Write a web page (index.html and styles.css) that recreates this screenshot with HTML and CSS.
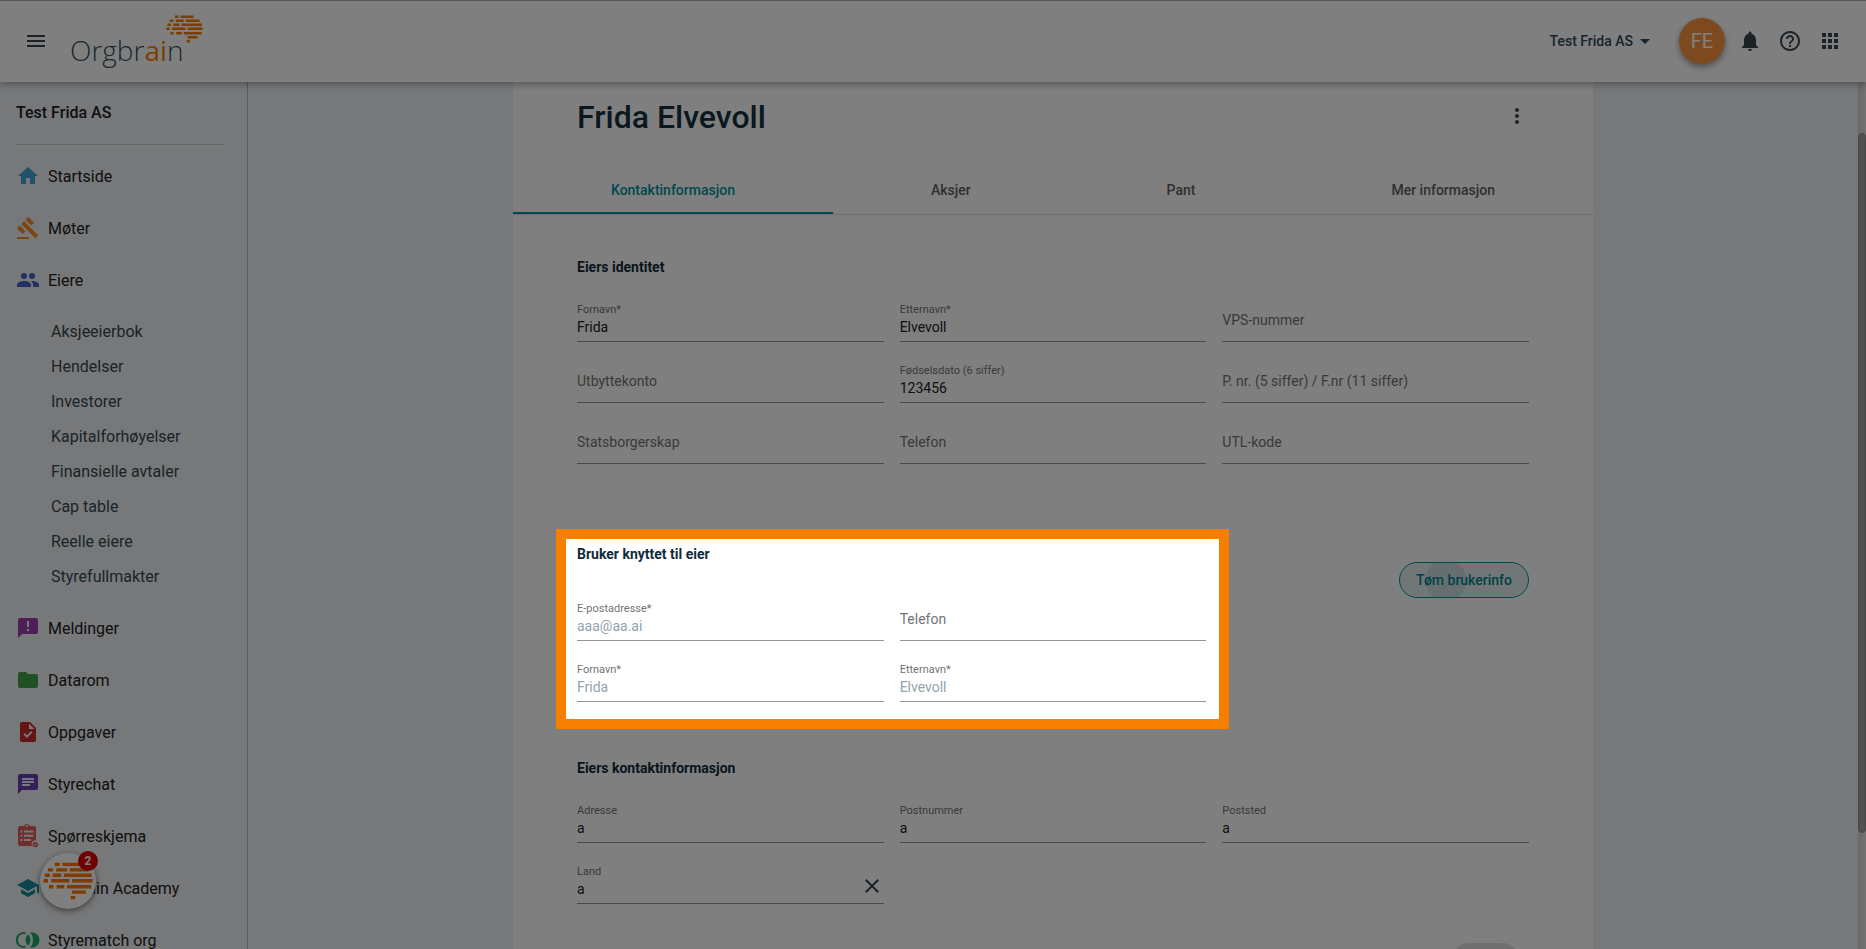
FILE: index.html
```html
<!DOCTYPE html>
<html lang="no">
<head>
<meta charset="utf-8">
<title>Orgbrain – Frida Elvevoll</title>
<link rel="stylesheet" href="styles.css">
</head>
<body>
<svg class="defs" aria-hidden="true">
  <symbol id="brain" viewBox="500 44 110 83">
    <g stroke="currentColor" stroke-width="7.5" stroke-linecap="butt">
      <path d="M526 49h11M543 49h39M511 61h11M529 61h24M559 61h41M504 73h11M521 73h19M546 73h61M501 85h10M518 85h40M564 85h45M513 98h10M530 98h17M553 98h53M564 110h30M561 122h10"/>
    </g>
  </symbol>
</svg>
<div class="app">
  <header class="topbar">
    <button class="icon-btn" aria-label="Meny"><svg viewBox="0 0 24 24"><path d="M3 18h18v-2H3v2zm0-5h18v-2H3v2zm0-7v2h18V6H3z"/></svg></button>
    <a class="logo" href="#" aria-label="Orgbrain"><span class="logo-text">Orgbr<b>ai</b>n</span><svg class="logo-mark"><use href="#brain"/></svg></a>
    <button class="org">Test Frida AS<svg viewBox="0 0 24 24"><path d="M7 10l5 5 5-5z"/></svg></button>
    <button class="avatar">FE</button>
    <nav class="tools">
      <button class="icon-btn" aria-label="Varsler"><svg viewBox="0 0 24 24"><path d="M12 22c1.100 0 2-.9 2-2h-4c0 1.100.89 2 2 2zm6-6v-5c0-3.070-1.640-5.640-4.500-6.320V4c0-.83-.67-1.500-1.500-1.500s-1.500.67-1.500 1.500v.68C7.630 5.360 6 7.920 6 11v5l-2 2v1h16v-1l-2-2z"/></svg></button>
      <button class="icon-btn" aria-label="Hjelp"><svg viewBox="0 0 24 24"><path d="M11 18h2v-2h-2v2zm1-16C6.480 2 2 6.480 2 12s4.480 10 10 10 10-4.480 10-10S17.520 2 12 2zm0 18c-4.410 0-8-3.590-8-8s3.590-8 8-8 8 3.590 8 8-3.590 8-8 8zm0-14c-2.210 0-4 1.790-4 4h2c0-1.100.9-2 2-2s2 .9 2 2c0 2-3 1.750-3 5h2c0-2.250 3-2.500 3-5 0-2.210-1.790-4-4-4z"/></svg></button>
      <button class="icon-btn" aria-label="Apper"><svg viewBox="0 0 24 24"><path d="M4 8h4V4H4v4zm6 12h4v-4h-4v4zm-6 0h4v-4H4v4zm0-6h4v-4H4v4zm6 0h4v-4h-4v4zm6-10v4h4V4h-4zm-6 4h4V4h-4v4zm6 6h4v-4h-4v4zm0 6h4v-4h-4v4z"/></svg></button>
    </nav>
  </header>

  <div class="body">
    <aside class="sidebar">
      <h2 class="side-title">Test Frida AS</h2>
      <nav class="side-nav">
        <a class="item" href="#"><svg viewBox="0 0 24 24" fill="#42a5d8"><path d="M10 20v-6h4v6h5v-8h3L12 3 2 12h3v8z"/></svg>Startside</a>
        <a class="item" href="#"><svg viewBox="0 0 24 24" fill="#f58a1f"><path d="M1 21h12v2H1zM5.245 8.070l2.830-2.827 14.140 14.142-2.828 2.828zM12.317 1l5.657 5.656-2.830 2.830-5.654-5.660zM3.825 9.485l5.657 5.657-2.828 2.828-5.657-5.657z"/></svg>Møter</a>
        <a class="item" href="#"><svg viewBox="0 0 24 24" fill="#4a5fc1"><circle cx="16" cy="8" r="3"/><circle cx="8" cy="8" r="3"/><path d="M8 13c-2.700 0-7 1-7 4v2h14v-2c0-3-4.300-4-7-4zm8 0c-.300 0-.600 0-1 .100 1.400.900 2 2.200 2 3.900v2h6v-2c0-3-4.300-4-7-4z"/></svg>Eiere</a>
        <div class="sub">
          <a href="#">Aksjeeierbok</a><a href="#">Hendelser</a><a href="#">Investorer</a><a href="#">Kapitalforhøyelser</a><a href="#">Finansielle avtaler</a><a href="#">Cap table</a><a href="#">Reelle eiere</a><a href="#">Styrefullmakter</a>
        </div>
        <a class="item" href="#"><svg viewBox="0 0 24 24" fill="#9c3fa8"><path d="M20 2H4c-1.100 0-1.990.9-1.990 2L2 22l4-4h14c1.100 0 2-.9 2-2V4c0-1.100-.9-2-2-2zm-7 13h-2v-2h2v2zm0-4h-2V5h2v6z"/></svg>Meldinger</a>
        <a class="item" href="#"><svg viewBox="0 0 24 24" fill="#43a047"><path d="M10 4H4c-1.100 0-1.990.9-1.990 2L2 18c0 1.100.9 2 2 2h16c1.100 0 2-.9 2-2V8c0-1.100-.9-2-2-2h-8l-2-2z"/></svg>Datarom</a>
        <a class="item" href="#"><svg viewBox="0 0 24 24" fill="#c62828"><path d="M14 2H6c-1.100 0-2 .9-2 2v16c0 1.100.89 2 1.990 2H18c1.100 0 2-.9 2-2V8l-6-6zm-3.060 16L7.400 14.460l1.410-1.410 2.120 2.120 4.240-4.240 1.410 1.410L10.940 18zM13 9V3.500L18.500 9H13z"/></svg>Oppgaver</a>
        <a class="item" href="#"><svg viewBox="0 0 24 24" fill="#6a3fb5"><path d="M20 2H4c-1.100 0-1.990.9-1.990 2L2 22l4-4h14c1.100 0 2-.9 2-2V4c0-1.100-.9-2-2-2zM6 6h12v2H6V6zm8 8H6v-2h8v2zm4-3H6V9h12v2z"/></svg>Styrechat</a>
        <a class="item" href="#"><svg viewBox="0 0 24 24" fill="#e05a5a"><path fill-rule="evenodd" d="M4 2h4.200a3 3 0 0 1 5.600 0H18a2 2 0 0 1 2 2v12.500a3.500 3.500 0 0 0-3.700 5.500H4a2 2 0 0 1-2-2V4a2 2 0 0 1 2-2zm7-1.200a1 1 0 1 0 0 2 1 1 0 0 0 0-2zM4.500 6.500v2h2v-2zm3.500 0v2h9.500v-2zm-3.500 4.300v2h2v-2zm3.500 0v2h9.500v-2zM4.500 15v2h2v-2zM8 15v2h7v-2z"/><circle cx="19.300" cy="20.600" r="2.700"/><path d="M18 20.700l1 1 1.700-2" fill="none" stroke="#eef0f2" stroke-width=".8"/></svg>Spørreskjema</a>
        <a class="item" href="#"><svg viewBox="0 0 24 24" fill="#168c9c"><path d="M5 13.180v4L12 21l7-3.820v-4L12 17l-7-3.820zM12 3L1 9l11 6 9-4.910V17h2V9L12 3z"/></svg>Orgbrain Academy</a>
        <a class="item" href="#"><svg viewBox="0 0 24 24" fill="#1fa863"><path d="M12 6.200a8 8 0 0 1 0 11.600 8 8 0 0 1 0-11.600z"/><path d="M9.500 5.200a7 7 0 1 0 0 13.600" fill="none" stroke="#1fa863" stroke-width="2"/><path d="M14 4.500h2a7.500 7.500 0 0 1 0 15h-2c4-4 4-11 0-15z"/></svg>Styrematch org</a>
      </nav>
    </aside>

    <main class="main">
      <article class="card">
        <div class="card-head">
          <h1>Frida Elvevoll</h1>
          <button class="icon-btn" aria-label="Flere valg"><svg viewBox="0 0 24 24"><path d="M12 8c1.100 0 2-.9 2-2s-.9-2-2-2-2 .9-2 2 .9 2 2 2zm0 2c-1.100 0-2 .9-2 2s.9 2 2 2 2-.9 2-2-.9-2-2-2zm0 6c-1.100 0-2 .9-2 2s.9 2 2 2 2-.9 2-2-.9-2-2-2z"/></svg></button>
        </div>
        <div class="tabs" role="tablist">
          <button class="tab active" role="tab" aria-selected="true">Kontaktinformasjon</button>
          <button class="tab" role="tab">Aksjer</button>
          <button class="tab" role="tab">Pant</button>
          <button class="tab" role="tab">Mer informasjon</button>
        </div>
        <form class="form">
          <section class="identity">
            <h3>Eiers identitet</h3>
            <div class="grid three">
              <div class="field"><label for="f1">Fornavn*</label><input id="f1" value="Frida"></div>
              <div class="field"><label for="f2">Etternavn*</label><input id="f2" value="Elvevoll"></div>
              <div class="field empty"><label for="f3">VPS-nummer</label><input id="f3"></div>
              <div class="field empty"><label for="f4">Utbyttekonto</label><input id="f4"></div>
              <div class="field"><label for="f5">Fødselsdato (6 siffer)</label><input id="f5" value="123456"></div>
              <div class="field empty"><label for="f6">P. nr. (5 siffer) / F.nr (11 siffer)</label><input id="f6"></div>
              <div class="field empty"><label for="f7">Statsborgerskap</label><input id="f7"></div>
              <div class="field empty"><label for="f8">Telefon</label><input id="f8"></div>
              <div class="field empty"><label for="f9">UTL-kode</label><input id="f9"></div>
            </div>
          </section>
          <section class="grid three user">
            <div class="spotlight">
              <h3>Bruker knyttet til eier</h3>
              <div class="grid two">
                <div class="field"><label for="u1">E-postadresse*</label><input id="u1" value="aaa@aa.ai" disabled></div>
                <div class="field empty"><label for="u2">Telefon</label><input id="u2"></div>
                <div class="field"><label for="u3">Fornavn*</label><input id="u3" value="Frida" disabled></div>
                <div class="field"><label for="u4">Etternavn*</label><input id="u4" value="Elvevoll" disabled></div>
              </div>
            </div>
            <button type="button" class="clear-user">Tøm brukerinfo</button>
          </section>
          <section class="contact">
            <h3>Eiers kontaktinformasjon</h3>
            <div class="grid three">
              <div class="field"><label for="c1">Adresse</label><input id="c1" value="a"></div>
              <div class="field"><label for="c2">Postnummer</label><input id="c2" value="a"></div>
              <div class="field"><label for="c3">Poststed</label><input id="c3" value="a"></div>
              <div class="field"><label for="c4">Land</label><input id="c4" value="a"><button type="button" class="icon-btn clear" aria-label="Fjern land"><svg viewBox="0 0 24 24"><path d="M19 6.410L17.590 5 12 10.590 6.410 5 5 6.410 10.590 12 5 17.590 6.410 19 12 13.410 17.590 19 19 17.590 13.410 12z"/></svg></button></div>
            </div>
          </section>
          <button class="save" aria-label="Lagre" disabled></button>
        </form>
      </article>
    </main>
    <div class="scroll-track"><div class="scroll-thumb"></div></div>
  </div>

  <button class="chat" aria-label="Orgbrain chat"><svg><use href="#brain"/></svg><span class="badge">2</span></button>
</div>
</body>
</html>
```

FILE: styles.css
```css
* { box-sizing: border-box; }
body {
  margin: 0;
  font-family: Roboto, "Liberation Sans", sans-serif;
  font-size: 14px;
  color: #212121;
  background: #eef0f2;
}
h1, h2, h3 { margin: 0; }
a { color: inherit; text-decoration: none; }
button {
  font: inherit;
  color: inherit;
  background: none;
  border: 0;
  padding: 0;
}
.defs { position: absolute; width: 0; height: 0; }
.app {
  position: relative;
  height: 100vh;
  overflow: hidden;
  display: flex;
  flex-direction: column;
}

/* Top bar */
.topbar {
  position: relative;
  z-index: 5;
  flex: none;
  height: 82px;
  display: flex;
  align-items: center;
  padding: 0 24px 1px;
  background: #fff;
  border-top: 1px solid #b0b0b0;
  box-shadow: 0 2px 8px rgba(0, 0, 0, .35);
}
.icon-btn {
  display: block;
  width: 24px;
  height: 24px;
  color: #37474f;
}
.icon-btn svg { display: block; width: 24px; height: 24px; fill: currentColor; }
.logo {
  position: relative;
  margin-left: 22px;
  color: #37535f;
}
.logo-text {
  display: block;
  font: 300 28px/36px "Open Sans", Lato, sans-serif;
  padding-top: 17px;
}
.logo-text b { font-weight: 400; color: #f57c00; }
.logo-mark {
  position: absolute;
  left: 96px;
  top: 0;
  width: 37px;
  height: 28px;
  color: #f57c00;
}
.org {
  display: flex;
  align-items: center;
  margin-left: auto;
  font-weight: 500;
  color: #2b4a57;
}
.org svg { width: 24px; height: 24px; fill: currentColor; }
.avatar {
  width: 46px;
  height: 46px;
  margin: 0 13px 0 22px;
  border-radius: 50%;
  background: #fb9540;
  color: #fff;
  font-size: 20px;
  box-shadow: 0 3px 6px rgba(0, 0, 0, .4);
}
.tools { display: flex; gap: 16px; }

/* Sidebar */
.body { flex: 1; min-height: 0; display: flex; }
.sidebar {
  flex: none;
  width: 248px;
  padding: 21px 0 0 16px;
  border-right: 1px solid #b4b6b8;
  font-size: 16px;
}
.side-title {
  margin-right: 23px;
  padding-bottom: 21px;
  border-bottom: 1px solid #cccecf;
  font-size: 16px;
  line-height: 20px;
  font-weight: 500;
}
.side-nav { padding-top: 5px; }
.item {
  display: flex;
  align-items: center;
  gap: 8px;
  height: 52px;
}
.item svg { width: 24px; height: 24px; overflow: visible; }
.sub { padding: 8px 0 8px 35px; color: #37474f; }
.sub a { display: block; line-height: 35px; }

/* Owner card */
.main { flex: 1; display: flex; justify-content: center; align-items: flex-start; }
.card { width: 1080px; background: #fff; }
.card-head {
  display: flex;
  justify-content: space-between;
  align-items: flex-start;
  padding: 15px 64px 29px;
}
.card-head .icon-btn { margin-top: 7px; }
h1 { font-size: 32px; line-height: 40px; font-weight: 500; color: #14323f; }
.tabs { display: flex; border-bottom: 1px solid #dcdcdc; }
.tab {
  flex: 1 1 auto;
  height: 48px;
  border-bottom: 2px solid transparent;
  padding-top: 2px;
  font-weight: 500;
  color: #616161;
}
.tab.active { color: #00929e; border-color: #00929e; }
.form { display: flex; flex-direction: column; padding: 42px 64px; }
h3 { font-size: 14px; line-height: 20px; font-weight: 700; color: #102b38; margin-bottom: 26px; }
.grid { display: grid; gap: 22px 16px; }
.three { grid-template-columns: repeat(3, 1fr); }
.two { grid-template-columns: repeat(2, 1fr); }

.field { display: grid; grid-template-rows: 12px 27px; }
.field label, .field input, .clear { grid-column: 1; }
.field label { grid-row: 1; font-size: 11px; line-height: 14px; color: #737373; }
.field input {
  grid-row: 2;
  width: 100%;
  font: inherit;
  line-height: 16px;
  padding: 4px 0 6px;
  border: 0;
  border-bottom: 1px solid #949494;
  border-radius: 0;
  background: none;
  color: #212121;
}
.field input:disabled { color: #90a4ae; }
.field.empty label {
  grid-row: 1 / 3;
  padding-top: 9px;
  font-size: 14px;
  line-height: 16px;
}
.clear { grid-row: 1 / 3; justify-self: end; margin-top: 9px; }

/* Highlighted group: frame plus dimming of everything around it */
.user { margin-top: 80px; }
.spotlight { position: relative; grid-column: 1 / 3; }
.spotlight h3 { margin-bottom: 38px; }
.spotlight::after {
  content: "";
  position: absolute;
  z-index: 20;
  inset: -15px -23px -27px -21px;
  border: 10px solid #f77f00;
  box-shadow: 0 0 0 2000px rgba(0, 0, 0, .5);
  pointer-events: none;
}
.clear-user {
  justify-self: end;
  align-self: start;
  height: 36px;
  margin-top: 18px;
  padding: 0 16px;
  border: 1px solid #00929e;
  border-radius: 18px;
  color: #008591;
  font-weight: 500;
  background: radial-gradient(circle at 46px 17px, #cbdfe0 20px, #e2eeef 21px);
}
.contact { margin-top: 56px; }
.save {
  align-self: flex-end;
  width: 69px;
  height: 36px;
  margin: 39px 9px 0 0;
  border-radius: 18px;
  background: #e0e0e0;
}

/* Scrollbar */
.scroll-track {
  flex: none;
  width: 8px;
  padding-top: 51px;
  background: linear-gradient(90deg, #d2d3d4, #e4e4e4);
}
.scroll-thumb { height: 700px; border-radius: 4px; background: #a2a2a2; border: 1px solid #8a8f92; }

/* Chat launcher */
.chat {
  position: absolute;
  z-index: 10;
  left: 40px;
  bottom: 40px;
  width: 56px;
  height: 56px;
  border-radius: 50%;
  background: #fff;
  color: #ff7400;
  display: flex;
  align-items: center;
  justify-content: center;
  box-shadow: 0 2px 6px rgba(0, 0, 0, .5);
}
.chat svg { width: 50px; height: 38px; }
.badge {
  position: absolute;
  top: -2px;
  right: -2px;
  width: 20px;
  height: 20px;
  border-radius: 50%;
  background: #e00000;
  color: #fff;
  font-size: 12px;
  line-height: 20px;
  font-weight: 700;
}
```
